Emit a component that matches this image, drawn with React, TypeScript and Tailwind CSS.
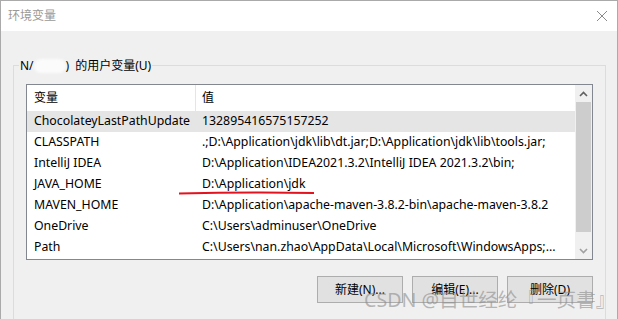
const FONT = 'font-["Noto_Sans","Noto_Sans_CJK_SC",sans-serif]';

const ROWS: { name: string; value: string }[] = [
  { name: 'ChocolateyLastPathUpdate', value: '132895416575157252' },
  { name: 'CLASSPATH', value: '.;D:\\Application\\jdk\\lib\\dt.jar;D:\\Application\\jdk\\lib\\tools.jar;' },
  { name: 'IntelliJ IDEA', value: 'D:\\Application\\IDEA2021.3.2\\IntelliJ IDEA 2021.3.2\\bin;' },
  { name: 'JAVA_HOME', value: 'D:\\Application\\jdk' },
  { name: 'MAVEN_HOME', value: 'D:\\Application\\apache-maven-3.8.2-bin\\apache-maven-3.8.2' },
  { name: 'OneDrive', value: 'C:\\Users\\adminuser\\OneDrive' },
  { name: 'Path', value: 'C:\\Users\\nan.zhao\\AppData\\Local\\Microsoft\\WindowsApps;...' },
];

const Button = ({ label }: { label: string }) => (
  <button
    className="w-[86px] h-[27px] bg-[#e1e1e1] border border-[#adadad] text-[12px] text-black"
    type="button"
  >
    {label}
  </button>
);

const ScrollBar = () => (
  <div className="w-[17px] flex flex-col bg-[#f0f0f0]">
    <div className="h-[17px] flex items-center justify-center">
      <svg width="9" height="6" viewBox="0 0 9 6">
        <path d="M1 5 L4.5 1.5 L8 5" fill="none" stroke="#606060" strokeWidth="1.6" />
      </svg>
    </div>
    <div className="h-[130px] mx-[1px] bg-[#cdcdcd]" />
    <div className="flex-1" />
    <div className="h-[17px] flex items-center justify-center">
      <svg width="9" height="6" viewBox="0 0 9 6">
        <path d="M1 1 L4.5 4.5 L8 1" fill="none" stroke="#a0a0a0" strokeWidth="1.6" />
      </svg>
    </div>
  </div>
);

const VariableList = () => (
  <div className="w-[567px] h-[176px] border border-[#828790] bg-white flex">
    <div className="flex-1 flex flex-col">
      <div className="h-[26px] flex items-center text-[12px] text-black">
        <div className="w-[169px] h-full flex items-center pl-[7px] border-r border-[#e5e5e5]">变量</div>
        <div className="pl-[6px]">值</div>
      </div>
      {ROWS.map((row, i) => (
        <div
          key={row.name}
          className={`h-[21px] flex items-center text-[12.3px] text-black whitespace-nowrap ${i === 0 ? 'bg-[#e5e5e5]' : ''}`}
        >
          <div className="w-[170px] pl-[7px]">{row.name}</div>
          <div className="pl-[5px]">{row.value}</div>
        </div>
      ))}
    </div>
    <ScrollBar />
  </div>
);

export default function App() {
  return (
    <div className={`${FONT} relative w-[618px] h-[319px] overflow-hidden bg-[#f0f0f0] border-t border-l border-r border-[#aaaaaa]`}>
      <div className="h-[30px] bg-white flex items-center justify-between pl-[7px] pr-[9px]">
        <span className="text-[12px] text-[#999999]">环境变量</span>
        <svg width="12" height="12" viewBox="0 0 12 12">
          <path d="M1 1 L11 11 M11 1 L1 11" stroke="#8a8a8a" strokeWidth="1" />
        </svg>
      </div>

      <div className="flex pt-[34px] pl-[12px] pr-[10px]">
        <div className="relative w-[593px] h-[300px] border border-[#dcdcdc] pt-[18px] pl-[12px] pr-[12px]">
          <div className="absolute -top-[9px] left-[5px] px-[1px] bg-[#f0f0f0] flex items-center text-[12px] text-black">
            <span>N/</span>
            <span className="inline-block w-[32px] h-[14px] rounded-full bg-[#fbfbfb] blur-[1.5px]" />
            <span>)</span>
            <span className="ml-[6px]">的用户变量(U)</span>
          </div>
          <VariableList />
          <div className="flex justify-end gap-[9px] mt-[16px]">
            <Button label="新建(N)..." />
            <Button label="编辑(E)..." />
            <Button label="删除(D)" />
          </div>
        </div>
        <div className="ml-[10px] w-px h-[300px] bg-[#e3e3e3]" />
      </div>

      <svg className="absolute left-[177px] top-[189px]" width="138" height="6" viewBox="0 0 138 6">
        <path d="M1 3.5 Q70 2 136 3" fill="none" stroke="#e3121f" strokeWidth="2" />
      </svg>

      <div className="absolute left-[363px] top-[286px] text-[19.6px] leading-[26px] text-[#8c8c8c]/60 whitespace-nowrap">
        CSDN @自世经纶『一页書』
      </div>
    </div>
  );
}
